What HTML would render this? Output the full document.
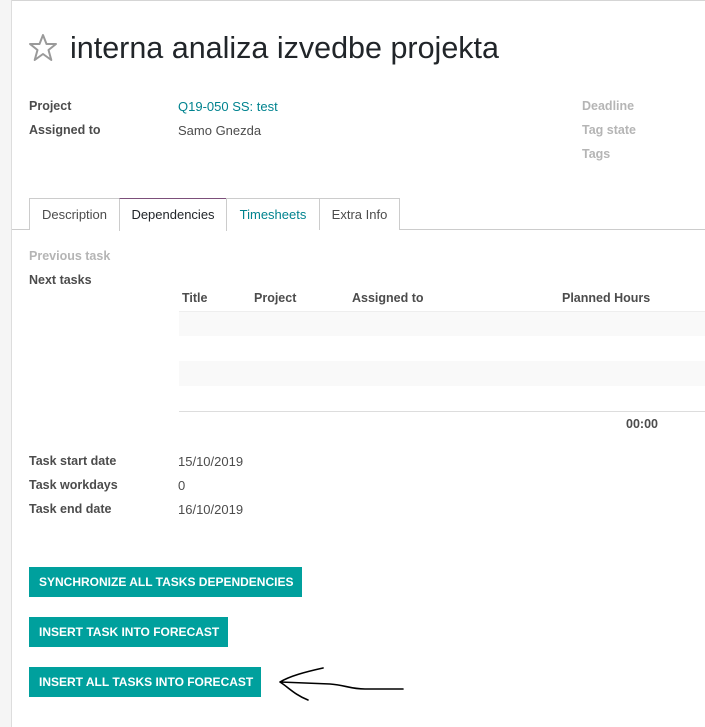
<!DOCTYPE html>
<html><head><meta charset="utf-8"><style>
*{margin:0;padding:0;box-sizing:border-box}
body{width:705px;height:727px;background:#fff;font-family:"Liberation Sans",sans-serif;font-size:13px;color:#4c4c4c;position:relative;overflow:hidden}
.abs{position:absolute;white-space:nowrap}
.strip{left:0;top:0;width:12px;height:727px;background:#f5f5f5;border-right:1px solid #ddd}
.top{left:12px;top:0;width:693px;height:1px;background:#d5d5d5}
.lbl{font-weight:bold;color:#4c4c4c;font-size:12.5px}
.mut{font-weight:bold;color:#b5b5b5;font-size:12.5px}
.tab{position:absolute;top:198px;height:32px;border:1px solid #ccc;border-bottom:none;line-height:31px;text-align:center;font-size:13px;color:#4c4c4c;background:#fff}
.btn{position:absolute;left:29px;height:30px;background:#00a09d;color:#fff;font-weight:bold;font-size:12px;line-height:30px;padding-left:10px}
.th{font-weight:bold;font-size:12.5px;color:#4c4c4c}
</style></head><body>
<div class="abs strip"></div>
<div class="abs top"></div>
<svg class="abs" style="left:28px;top:33px" width="30" height="29" viewBox="0 0 30 29"><polygon points="15,2 18.5,11 28,11 20.5,17 23.3,27 15,21 6.7,27 9.5,17 2,11 11.5,11" fill="none" stroke="#9a9a9a" stroke-width="2" stroke-linejoin="round"/></svg>
<div class="abs" style="left:70px;top:31px;font-size:30.5px;color:#212529">interna analiza izvedbe projekta</div>
<div class="abs lbl" style="left:29px;top:99px">Project</div>
<div class="abs lbl" style="left:29px;top:123px">Assigned to</div>
<div class="abs" style="left:178px;top:99px;color:#00838f">Q19-050 SS: test</div>
<div class="abs" style="left:178px;top:123px">Samo Gnezda</div>
<div class="abs mut" style="left:582px;top:99px">Deadline</div>
<div class="abs mut" style="left:582px;top:123px">Tag state</div>
<div class="abs mut" style="left:582px;top:147px">Tags</div>
<div class="abs" style="left:12px;top:229px;width:693px;height:1px;background:#ccc"></div>
<div class="tab" style="left:29px;width:91px">Description</div>
<div class="tab" style="left:119px;width:108px;border-top:1px solid #7c4f7a;height:33px;color:#212529">Dependencies</div>
<div class="tab" style="left:226px;width:94px;color:#00838f">Timesheets</div>
<div class="tab" style="left:319px;width:81px">Extra Info</div>
<div class="abs mut" style="left:29px;top:249px">Previous task</div>
<div class="abs lbl" style="left:29px;top:273px">Next tasks</div>
<div class="abs th" style="left:182px;top:291px">Title</div>
<div class="abs th" style="left:254px;top:291px">Project</div>
<div class="abs th" style="left:352px;top:291px">Assigned to</div>
<div class="abs th" style="left:562px;top:291px">Planned Hours</div>
<div class="abs" style="left:179px;top:311px;width:526px;height:25px;background:#f9f9f9;border-top:1px solid #eee"></div>
<div class="abs" style="left:179px;top:361px;width:526px;height:25px;background:#f9f9f9"></div>
<div class="abs" style="left:179px;top:411px;width:526px;height:1px;background:#ddd"></div>
<div class="abs th" style="left:626px;top:417px">00:00</div>
<div class="abs lbl" style="left:29px;top:454px">Task start date</div>
<div class="abs lbl" style="left:29px;top:478px">Task workdays</div>
<div class="abs lbl" style="left:29px;top:502px">Task end date</div>
<div class="abs" style="left:178px;top:454px">15/10/2019</div>
<div class="abs" style="left:178px;top:478px">0</div>
<div class="abs" style="left:178px;top:502px">16/10/2019</div>
<div class="btn" style="top:567px;width:273px">SYNCHRONIZE ALL TASKS DEPENDENCIES</div>
<div class="btn" style="top:617px;width:199px">INSERT TASK INTO FORECAST</div>
<div class="btn" style="top:667px;width:232px">INSERT ALL TASKS INTO FORECAST</div>
<svg class="abs" style="left:270px;top:660px" width="140" height="45" viewBox="0 0 140 45"><path d="M133 29 L95 29 C80 29 75 25 60 24 L10 22 M10 22 C20 16 35 12 53 8 M10 22 C18 27 25 35 38 40" fill="none" stroke="#000" stroke-width="1.6" stroke-linecap="round"/></svg>
</body></html>
